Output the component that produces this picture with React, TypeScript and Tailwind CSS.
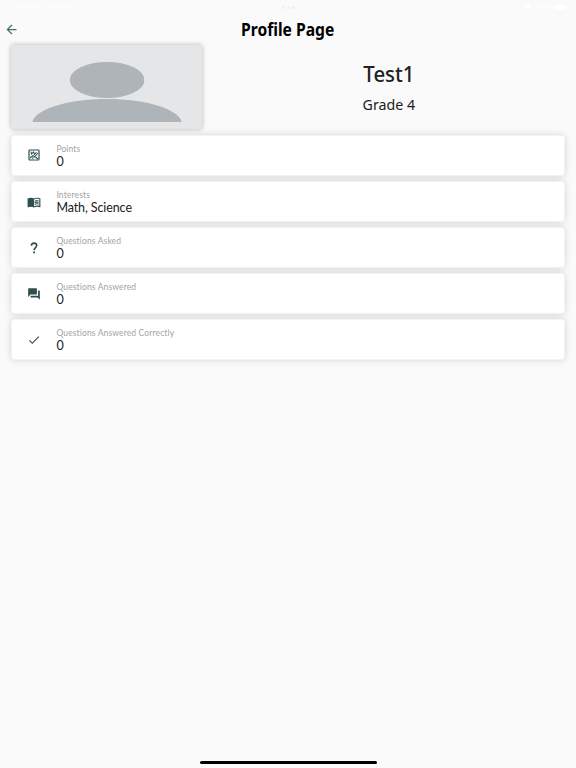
import type { ReactNode } from 'react';
import { MdArrowBack, MdCheck, MdMenuBook, MdQuestionAnswer } from 'react-icons/md';

type InfoCardProps = {
  icon: ReactNode;
  label: string;
  value: string;
};

function PointsIcon() {
  return (
    <svg
      width="12"
      height="12"
      viewBox="0 0 24 24"
      fill="none"
      stroke="currentColor"
      strokeWidth="2.4"
      className="mb-px"
    >
      <rect x="2" y="2" width="20" height="20" rx="1.5" />
      <path d="M4 18l6-5 3 3 7-8M6 5l1 5 4-4 2 5 4-5M15 16l5 4M8 19l3-2" strokeWidth="2.1" />
    </svg>
  );
}

function QuestionIcon() {
  return (
    <svg width="14" height="14" viewBox="0 0 24 24" fill="none" stroke="currentColor" strokeWidth="2.8">
      <path d="M7.6 8.2C7.6 5.3 9.6 3.6 12.1 3.6c2.6 0 4.5 1.7 4.5 4.1 0 3.5-4.4 3.9-4.4 8.1" />
      <path d="M10.6 18h3.1v3.1h-3.1z" fill="currentColor" stroke="none" />
    </svg>
  );
}

function Avatar() {
  return (
    <div className="h-[84px] w-[191px] overflow-hidden rounded-[2px] bg-[#e4e6e8] shadow-[0_0_5px_rgba(0,0,0,0.28)]">
      <svg width="191" height="84" viewBox="0 0 191 84" fill="#aeb4b8">
        <ellipse cx="96.1" cy="35" rx="37.3" ry="18" />
        <path d="M21.3 77C24.6 64 56.6 54 96.1 54S167.6 64 170.6 77Z" />
      </svg>
    </div>
  );
}

function InfoCard({ icon, label, value }: InfoCardProps) {
  return (
    <li className="flex h-[41px] items-center rounded-[3px] border border-[#f4f4f4] bg-white shadow-[0_0_7px_rgba(0,0,0,0.15)]">
      <div className="-ml-px flex w-[45px] justify-center text-[#2f4f4f]">{icon}</div>
      <div className="flex flex-col pt-px font-['Lato',sans-serif]">
        <span className="text-[8.5px] leading-[12px] tracking-[0.14px] text-[#a3a3a3]">{label}</span>
        <span className="text-[12.5px] leading-[14px] tracking-[-0.1px] text-[#202020]">{value}</span>
      </div>
    </li>
  );
}

function StatusBar() {
  return (
    <div className="flex h-[14px] items-center justify-between px-[10px] text-[6.5px] font-semibold text-white">
      <div className="flex w-[90px] gap-[6px]">
        <span>10:07 PM</span>
        <span>Thu Sep 7</span>
      </div>
      <div className="flex gap-[2px]">
        <i className="size-[3px] rounded-full bg-[#f0f0f0]" />
        <i className="size-[3px] rounded-full bg-[#f0f0f0]" />
        <i className="size-[3px] rounded-full bg-[#f0f0f0]" />
      </div>
      <div className="flex w-[90px] items-center justify-end gap-[3px]">
        <svg width="8" height="6" viewBox="0 0 16 12" fill="white">
          <path d="M8 12L0 3.5C4-.8 12-.8 16 3.5Z" />
        </svg>
        <span>100%</span>
        <i className="h-[5px] w-[12px] rounded-[1.5px] bg-white" />
      </div>
    </div>
  );
}

export default function App() {
  return (
    <div className="flex h-[768px] w-[576px] flex-col overflow-hidden bg-[#fafafa] font-['Open_Sans',sans-serif]">
      <StatusBar />
      <header className="grid h-[31px] grid-cols-[40px_1fr_40px] items-center">
        <MdArrowBack size={15} className="ml-[4px] text-[#3d7466]" />
        <h1 className="text-center font-['Noto_Sans',sans-serif] text-[17px] leading-[24px] font-bold text-black">
          <span className="inline-block scale-x-[0.92]">Profile Page</span>
        </h1>
      </header>

      <main className="pr-[11px] pl-[11.4px]">
        <section className="flex h-[90px]">
          <Avatar />
          <div className="flex flex-1 flex-col items-center pt-[14px] pl-[10px] text-[#202124]">
            <h2 className="font-['Noto_Sans',sans-serif] text-[21.5px] leading-[30px] font-medium">
              <span className="inline-block scale-x-[0.95]">Test1</span>
            </h2>
            <p className="mt-[3px] font-['Noto_Sans',sans-serif] text-[14.5px] leading-[24px]">
              <span className="inline-block scale-x-[0.98]">Grade 4</span>
            </p>
          </div>
        </section>

        <ul className="flex flex-col gap-[5px]">
          <InfoCard icon={<PointsIcon />} label="Points" value="0" />
          <InfoCard icon={<MdMenuBook size={14} />} label="Interests" value="Math, Science" />
          <InfoCard icon={<QuestionIcon />} label="Questions Asked" value="0" />
          <InfoCard icon={<MdQuestionAnswer size={14} />} label="Questions Answered" value="0" />
          <InfoCard icon={<MdCheck size={14} />} label="Questions Answered Correctly" value="0" />
        </ul>
      </main>

      <div className="mx-auto mt-auto mb-[4.5px] h-[3px] w-[177px] rounded-full bg-black" />
    </div>
  );
}
